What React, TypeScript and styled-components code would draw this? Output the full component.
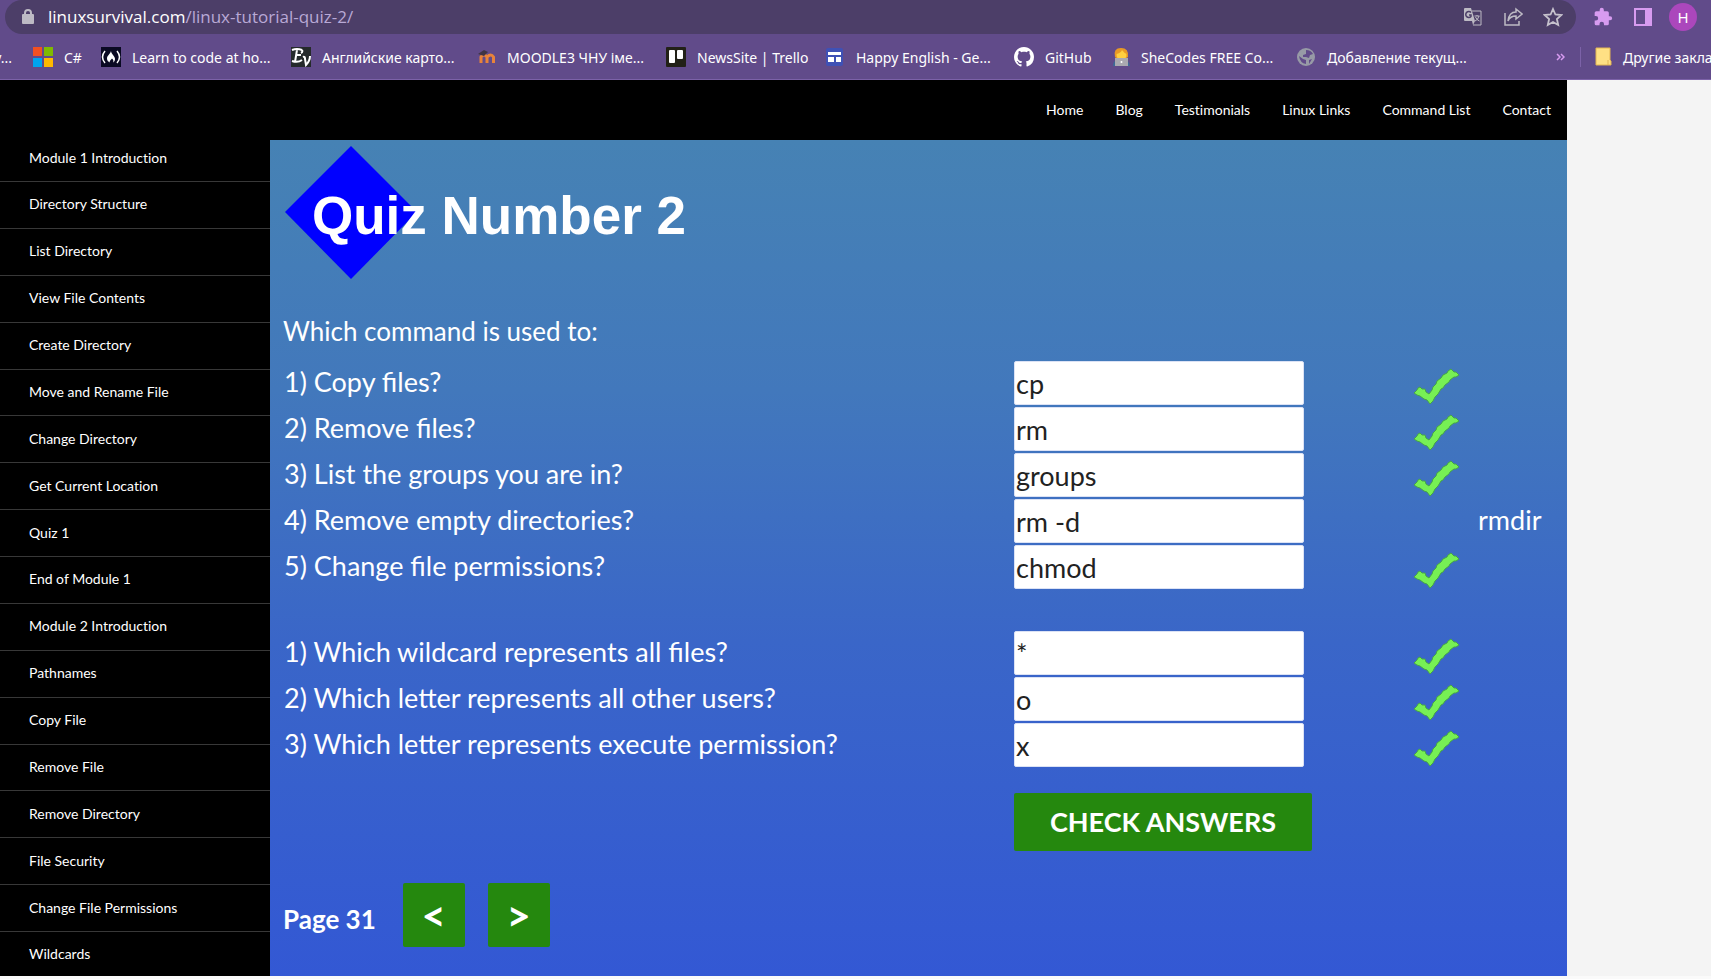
import React from 'react';
import styled, { createGlobalStyle } from 'styled-components';

const Global = createGlobalStyle`
  * { box-sizing: border-box; }
  html, body { margin: 0; background: #fafafa; }
  body { font-family: Lato, sans-serif; overflow-x: hidden; }
  a { color: inherit; text-decoration: none; }
  button { font: inherit; border: 0; cursor: pointer; }
`;

const Browser = styled.header`
  background: #614b8a;
  border-bottom: 1px solid #7c62a8;
  font-family: "Noto Sans", "Open Sans", sans-serif;
  color: #fff;
  height: 80px;
  overflow: hidden;
`;
const AddressRow = styled.div`
  display: flex;
  align-items: flex-start;
  padding-left: 5px;
`;
const AddressBar = styled.div`
  flex: 1;
  height: 34px;
  border-radius: 17px;
  background: #4c3e68;
  display: flex;
  align-items: center;
  gap: 14px;
  padding: 0 13px 0 17px;
`;
const UrlText = styled.div`
  flex: 1;
  font-family: "Open Sans", sans-serif;
  font-size: 17px;
  line-height: 34px;
  color: #b9a9d6;
  span { color: #fff; }
`;
const ToolButton = styled.button<{ $ml?: number }>`
  background: none;
  padding: 0;
  width: 20px;
  height: 20px;
  margin-left: ${(p) => p.$ml ?? 6}px;
  svg { display: block; }
`;
const Extras = styled.div`
  display: flex;
  align-items: center;
  height: 34px;
  gap: 20px;
  padding: 0 14px 0 17px;
`;
const Avatar = styled.button`
  width: 28px;
  height: 28px;
  border-radius: 50%;
  background: #ab47bc;
  color: #fff;
  font-size: 15px;
  padding: 0;
  margin-left: -4px;
`;
const Bookmarks = styled.nav`
  display: flex;
  align-items: center;
  height: 46px;
  white-space: nowrap;
  font-size: 14px;
`;
const Bookmark = styled.a<{ $w: number }>`
  flex: 0 0 ${(p) => p.$w}px;
  min-width: 0;
  overflow: hidden;
  display: flex;
  align-items: center;
  gap: 11px;
  svg { flex: none; }
`;
const CutBookmark = styled(Bookmark)`
  justify-content: flex-end;
  padding-right: 21px;
`;
const Divider = styled.span`
  width: 1px;
  height: 20px;
  background: #7c62a8;
  margin: 0 14px;
`;
const More = styled.button`
  background: none;
  color: #d79bf0;
  padding: 0;
  width: 10px;
  margin-left: auto;
  svg { display: block; }
`;

const Page = styled.div`
  background: #f4f4f4;
  padding-right: 144px;
`;
const TopNav = styled.nav`
  background: #000;
  color: #fff;
  height: 60px;
  display: flex;
  justify-content: flex-end;
  align-items: center;
  gap: 32px;
  padding: 0 16px 2px 0;
  font-size: 14px;
  font-variant-ligatures: none;
`;
const Columns = styled.div`
  display: grid;
  grid-template-columns: 270px minmax(0, 1fr);
`;
const Sidebar = styled.nav`
  background: #000;
  color: #fff;
  font-size: 14px;
  font-variant-ligatures: none;
  display: flex;
  flex-direction: column;
`;
const SideLink = styled.a`
  flex: 1 1 0;
  display: flex;
  align-items: center;
  padding: 0 0 2px 29px;
  border-bottom: 1px solid #383838;
  &:first-child { flex: 0 0 42px; padding-bottom: 6px; }
  &:last-child { flex: 0 0 44px; border-bottom: 0; }
`;
const Content = styled.main`
  background: linear-gradient(#4682b4, #4278bc 30%, #3a66c8 60%, #3358d4);
  color: #fff;
  padding: 6px 14px 29px 13px;
  font-size: 27px;
  line-height: 40px;
`;
const Title = styled.h1`
  margin: 0 0 31px 2px;
  height: 134px;
  svg { display: block; }
`;
const Intro = styled.p`
  margin: 0 0 10px;
  font-size: 26px;
`;
const Group = styled.div<{ $gap: number }>`
  margin-bottom: ${(p) => p.$gap}px;
`;
const Row = styled.div`
  display: grid;
  grid-template-columns: minmax(0, 1fr) 290px 109px 46px 94px;
  height: 46px;
  align-items: start;
`;
const Question = styled.label`
  line-height: 42px;
  padding-left: 1px;
`;
const Answer = styled.input`
  width: 290px;
  height: 44px;
  border: 1px solid #dbe2f5;
  border-radius: 2px;
  background: #fff;
  color: #222;
  font: 27px Lato, sans-serif;
  padding: 0 1px;
`;
const Correct = styled.svg`
  grid-column: 4;
  width: 47px;
  height: 37px;
  margin-top: 7px;
`;
const Solution = styled.output`
  grid-column: 5;
  line-height: 42px;
  padding-left: 19px;
`;
const CheckButton = styled.button`
  display: block;
  width: 298px;
  height: 58px;
  margin: 0 241px 32px auto;
  background: #25880e;
  border-radius: 2px;
  color: #fff;
  font-weight: 700;
  padding: 0;
`;
const Pager = styled.div`
  display: flex;
  align-items: center;
  gap: 23px;
  font-size: 26px;
  font-weight: 700;
`;
const PageLabel = styled.span`
  margin-right: 4px;
  padding-top: 7px;
`;
const PageButton = styled.button`
  width: 62px;
  height: 64px;
  background: #25880e;
  border-radius: 2px;
  color: #fff;
  font-size: 42px;
  font-weight: 700;
  padding: 0;
`;

const Tick = () => (
  <Correct viewBox="0 0 47 37" role="img" aria-label="Correct">
    <path
      d="M38 1 L41 4 L43 4 L46 7 L43 9 L41 9 L37 12 L36 14 L32 17 L30 20 L28 21 L25 26 L22 29 L20 33 L17 36 L14 32 L11 31 L7 28 L4 27 L1 25 L4 22 L5 20 L7 19 L9 21 L12 21 L13 24 L16 26 L19 22 L20 19 L23 16 L24 13 L28 10 L30 7 L34 5 L35 3 Z"
      fill="#77f054" stroke="#46a548" strokeWidth="1"
    />
  </Correct>
);

const Icon = ({ children, w = 20 }: { children: React.ReactNode; w?: number }) => (
  <svg width={w} height="20" viewBox={`0 0 ${w} 20`} aria-hidden="true">{children}</svg>
);

const icons = {
  ms: (
    <Icon>
      <path fill="#f25022" d="M0 0h9v9H0z" /><path fill="#7fba00" d="M11 0h9v9h-9z" />
      <path fill="#00a4ef" d="M0 11h9v9H0z" /><path fill="#ffb900" d="M11 11h9v9h-9z" />
    </Icon>
  ),
  fcc: (
    <Icon>
      <path fill="#0a0a23" d="M0 0h20v20H0z" />
      <path d="M4 4Q-1 10 4 16M16 4Q21 10 16 16" fill="none" stroke="#fff" strokeWidth="1.5" />
      <path d="M10 4c0 3 4 5 4 8 0 2-1 3-2 3.500 1-2 0-3-1-4-1 1-3 3-2 4-2-1-3-2-3-4 0-3 3-4 4-7.500z" fill="#fff" />
    </Icon>
  ),
  ev: (
    <Icon>
      <path fill="#252a2b" d="M0 0h20v20H0z" />
      <path d="M1 3q5-2 10 0M11 3q1 2-1 3M6 3L4 15M5 8h5M1 14q6 2 10-1M12 10q2-1 2 2l1 6q4-4 4-9" fill="none" stroke="#fff" strokeWidth="2" />
    </Icon>
  ),
  moodle: (
    <Icon>
      <path d="M5 16V10Q8 6 11 10V16M11 10Q15 6 17.500 10V16" fill="none" stroke="#e8833a" strokeWidth="3" />
      <path d="M2 7l6-4 4 2-4 4z" fill="#3e3444" />
    </Icon>
  ),
  trello: (
    <Icon>
      <rect width="20" height="20" rx="1" fill="#222117" />
      <rect x="3" y="3" width="6" height="13" rx="1" fill="#fff" /><rect x="11" y="3" width="6" height="9" rx="1" fill="#fff" />
    </Icon>
  ),
  sites: (
    <Icon>
      <rect x="1" y="1" width="17" height="18" rx="2" fill="#3f51b5" />
      <path fill="#fff" d="M3 5h13v3H3zM3 10h6v5H3zM11 10h5v5h-5z" />
    </Icon>
  ),
  github: (
    <svg width="20" height="20" viewBox="0 0 16 16" aria-hidden="true">
      <path fill="#fff" d="M8 0C3.580 0 0 3.580 0 8c0 3.540 2.290 6.530 5.470 7.590.4.070.55-.17.55-.38 0-.19-.01-.82-.01-1.490-2.010.37-2.530-.49-2.690-.94-.09-.23-.48-.94-.82-1.130-.28-.15-.68-.52-.01-.53.63-.01 1.080.58 1.230.82.72 1.210 1.870.87 2.330.66.070-.52.28-.87.51-1.070-1.780-.2-3.640-.89-3.640-3.950 0-.87.31-1.590.82-2.150-.08-.2-.36-1.020.08-2.120 0 0 .67-.21 2.200.82.64-.18 1.320-.27 2-.27s1.360.09 2 .27c1.530-1.040 2.200-.82 2.200-.82.44 1.100.16 1.920.08 2.120.51.56.82 1.270.82 2.150 0 3.070-1.870 3.750-3.650 3.950.29.25.54.73.54 1.480 0 1.070-.01 1.930-.01 2.200 0 .21.15.46.55.38A8.010 8.010 0 0 0 16 8c0-4.420-3.580-8-8-8z" />
    </svg>
  ),
  coder: (
    <Icon w={17}>
      <path fill="#3c6a96" d="M0 19q0-7 8-7t9 7z" />
      <path fill="#e99a25" d="M2 10Q0 1 8 1t7 9l-3 2H4z" />
      <circle cx="8.500" cy="8" r="5" fill="#ffcf3f" /><path fill="#e99a25" d="M3 7q5-1 6-4 2 3 5 4V4Q8-1 3 4z" />
      <path fill="#a9a9b0" d="M2 11h13v8H2z" /><circle cx="8.500" cy="15" r="1" fill="#fff" />
    </Icon>
  ),
  globe: (
    <Icon>
      <circle cx="10" cy="10" r="9" fill="#979aa6" />
      <path fill="#614b8a" d="M10 3q5 0 7 4l-3 1-1 3-3-1-3 0 0-2 3-1zM3 9l4 3 3 1v4q-6-1-7-8zM13 13l3-1-3 5z" />
    </Icon>
  ),
  folder: (
    <Icon w={17}>
      <path fill="#ffe084" stroke="#e3b653" d="M1 1h14v12l1 1v4H1z" /><path d="M13 13v5" stroke="#e3b653" />
    </Icon>
  ),
};

const bookmarks: { label: string; icon: React.ReactNode; w: number }[] = [
  { label: 'C#', icon: icons.ms, w: 68 },
  { label: 'Learn to code at ho...', icon: icons.fcc, w: 190 },
  { label: 'Английские карто...', icon: icons.ev, w: 185 },
  { label: 'MOODLE3 ЧНУ іме...', icon: icons.moodle, w: 190 },
  { label: 'NewsSite | Trello', icon: icons.trello, w: 159 },
  { label: 'Happy English - Ge...', icon: icons.sites, w: 189 },
  { label: 'GitHub', icon: icons.github, w: 99 },
  { label: 'SheCodes FREE Co...', icon: icons.coder, w: 183 },
  { label: 'Добавление текущ...', icon: icons.globe, w: 190 },
];

const modules = [
  'Module 1 Introduction', 'Directory Structure', 'List Directory', 'View File Contents', 'Create Directory',
  'Move and Rename File', 'Change Directory', 'Get Current Location', 'Quiz 1', 'End of Module 1',
  'Module 2 Introduction', 'Pathnames', 'Copy File', 'Remove File', 'Remove Directory', 'File Security',
  'Change File Permissions', 'Wildcards',
];

type Item = { q: string; a: string; solution?: string };
const commands: Item[] = [
  { q: '1) Copy files?', a: 'cp' },
  { q: '2) Remove files?', a: 'rm' },
  { q: '3) List the groups you are in?', a: 'groups' },
  { q: '4) Remove empty directories?', a: 'rm -d', solution: 'rmdir' },
  { q: '5) Change file permissions?', a: 'chmod' },
];
const letters: Item[] = [
  { q: '1) Which wildcard represents all files?', a: '*' },
  { q: '2) Which letter represents all other users?', a: 'o' },
  { q: '3) Which letter represents execute permission?', a: 'x' },
];

const Questions = ({ items, name, gap }: { items: Item[]; name: string; gap: number }) => (
  <Group $gap={gap}>
    {items.map((it, i) => (
      <Row key={it.q}>
        <Question htmlFor={`${name}${i}`}>{it.q}</Question>
        <Answer id={`${name}${i}`} type="text" defaultValue={it.a} />
        {it.solution ? <Solution htmlFor={`${name}${i}`}>{it.solution}</Solution> : <Tick />}
      </Row>
    ))}
  </Group>
);

export default function App() {
  return (
    <>
      <Global />
      <Browser>
        <AddressRow>
          <AddressBar>
            <svg width="12" height="16" viewBox="0 0 12 16" aria-hidden="true">
              <path d="M3 7V4a3 3 0 0 1 6 0v3" fill="none" stroke="#bdbac4" strokeWidth="2" />
              <rect x="0" y="5" width="12" height="10" rx="1" fill="#bdbac4" />
            </svg>
            <UrlText><span>linuxsurvival.com</span>/linux-tutorial-quiz-2/</UrlText>
            <ToolButton aria-label="Translate">
              <svg width="20" height="20" viewBox="0 0 20 20">
                <path d="M9 4h9v14h-8" fill="none" stroke="#bdbac4" />
                <path d="M2 1h6l4 13H2a1 1 0 0 1-1-1V2a1 1 0 0 1 1-1zM9 14h3l-2 4z" fill="#bdbac4" />
                <path d="M8 5.500a3 3 0 1 0 0 4V8H6" fill="none" stroke="#4c3e68" strokeWidth="1.500" />
                <path d="M11.500 9h5M14 8v1M16 9q-1 4-4 5M12.500 10q1 3 4 4" fill="none" stroke="#bdbac4" />
              </svg>
            </ToolButton>
            <ToolButton aria-label="Share">
              <svg width="20" height="20" viewBox="0 0 20 20" fill="none" stroke="#bdbac4" strokeWidth="1.500">
                <path d="M2 6v12h14v-4" /><path d="M13 2l6 5-6 5V9q-6 0-8 5 1-9 8-9z" />
              </svg>
            </ToolButton>
            <ToolButton aria-label="Bookmark">
              <svg width="20" height="20" viewBox="0 0 20 20" fill="none" stroke="#c6c2cd" strokeWidth="1.800">
                <path d="M10 2l2.400 5.500 6 .5-4.500 4 1.300 6L10 15l-5.200 3 1.300-6L1.600 8l6-.5z" />
              </svg>
            </ToolButton>
          </AddressBar>
          <Extras>
            <ToolButton $ml={0} aria-label="Extensions">
              <svg width="20" height="20" viewBox="0 0 24 24" fill="#d79bf0">
                <path d="M20.500 11H19V7a2 2 0 0 0-2-2h-4V3.500a2.500 2.500 0 0 0-5 0V5H4a2 2 0 0 0-2 2v3.800h1.500a2.700 2.700 0 0 1 0 5.400H2V20a2 2 0 0 0 2 2h3.800v-1.500a2.700 2.700 0 0 1 5.400 0V22H17a2 2 0 0 0 2-2v-4h1.500a2.500 2.500 0 0 0 0-5z" />
              </svg>
            </ToolButton>
            <ToolButton $ml={0} aria-label="Side panel">
              <svg width="20" height="20" viewBox="0 0 20 20">
                <path fillRule="evenodd" fill="#d79bf0" d="M1 1h18v18H1zM3 3v14h9V3z" />
              </svg>
            </ToolButton>
            <Avatar>H</Avatar>
          </Extras>
        </AddressRow>
        <Bookmarks>
          <CutBookmark href="#" $w={33}>у...</CutBookmark>
          {bookmarks.map((b) => (
            <Bookmark key={b.label} href="#" $w={b.w}>{b.icon}{b.label}</Bookmark>
          ))}
          <More aria-label="More bookmarks">
            <svg width="9" height="8" viewBox="0 0 9 8" fill="none" stroke="#d79bf0" strokeWidth="1.500">
              <path d="M1 1l3 3-3 3M5 1l3 3-3 3" />
            </svg>
          </More>
          <Divider />
          <Bookmark href="#" $w={116}>{icons.folder}Другие закладки</Bookmark>
        </Bookmarks>
      </Browser>
      <Page>
        <TopNav>
          {['Home', 'Blog', 'Testimonials', 'Linux Links', 'Command List', 'Contact'].map((t) => (
            <a key={t} href="#">{t}</a>
          ))}
        </TopNav>
        <Columns>
          <Sidebar>
            {modules.map((m) => <SideLink key={m} href="#">{m}</SideLink>)}
          </Sidebar>
          <Content>
            <Title>
              <svg width="420" height="134" viewBox="0 0 420 134" role="img" aria-label="Quiz Number 2">
                <path d="M66 0L132 66L66 133L0 66Z" fill="#00f" />
                <text x="27" y="88" fill="#fff" fontFamily="Liberation Sans, Arial, sans-serif" fontWeight="700" fontSize="53">Quiz Number 2</text>
              </svg>
            </Title>
            <Intro>Which command is used to:</Intro>
            <Questions items={commands} name="command" gap={40} />
            <Questions items={letters} name="letter" gap={24} />
            <CheckButton>CHECK ANSWERS</CheckButton>
            <Pager>
              <PageLabel>Page 31</PageLabel>
              <PageButton aria-label="Previous page">&lt;</PageButton>
              <PageButton aria-label="Next page">&gt;</PageButton>
            </Pager>
          </Content>
        </Columns>
      </Page>
    </>
  );
}
